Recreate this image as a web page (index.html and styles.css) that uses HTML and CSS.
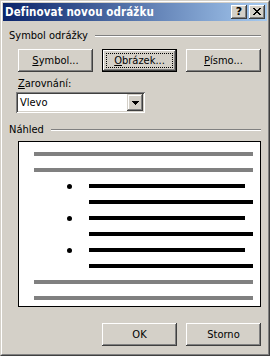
FILE: index.html
```html
<!DOCTYPE html>
<html>
<head>
<meta charset="utf-8">
<link rel="stylesheet" href="styles.css">
</head>
<body>
<div class="window">
  <div class="frame">
    <div class="titlebar">
      <span class="title">Definovat novou odrážku</span>
      <div class="tb-buttons">
        <div class="tb-btn help">?</div>
        <div class="tb-btn close">
          <svg width="8" height="7" viewBox="0 0 8 7" shape-rendering="crispEdges"><path fill="#000" d="M0 0h2v1H0z M6 0h2v1H6z M1 1h2v1H1z M5 1h2v1H5z M2 2h4v1H2z M3 3h2v1H3z M2 4h4v1H2z M1 5h2v1H1z M5 5h2v1H5z M0 6h2v1H0z M6 6h2v1H6z"/></svg>
        </div>
      </div>
    </div>
    <div class="content">
      <div class="group-head head-symbol"><span>Symbol odrážky</span><div class="etch"></div></div>
      <div class="btn-row">
        <div class="btn"><span><u>S</u>ymbol...</span></div>
        <div class="btn default"><span class="focus"><span><u>O</u>brázek...</span></span></div>
        <div class="btn"><span><u>P</u>ísmo...</span></div>
      </div>
      <div class="label"><u>Z</u>arovnání:</div>
      <div class="combo">
        <span class="combo-text">Vlevo</span>
        <div class="combo-btn">
          <svg width="7" height="4" viewBox="0 0 7 4" shape-rendering="crispEdges"><path fill="#000" d="M0 0h7v1H0z M1 1h5v1H1z M2 2h3v1H2z M3 3h1v1H3z"/></svg>
        </div>
      </div>
      <div class="group-head head-preview"><span>Náhled</span><div class="etch"></div></div>
      <div class="preview">
        <div class="gline"></div>
        <div class="gline"></div>
        <div class="brow"><span class="bullet"></span><span class="bar short"></span></div>
        <div class="brow plain"><span class="bar long"></span></div>
        <div class="brow"><span class="bullet"></span><span class="bar short"></span></div>
        <div class="brow plain"><span class="bar long"></span></div>
        <div class="brow"><span class="bullet"></span><span class="bar short"></span></div>
        <div class="brow plain"><span class="bar long"></span></div>
        <div class="gline"></div>
        <div class="gline"></div>
      </div>
      <div class="footer">
        <div class="btn"><span>OK</span></div>
        <div class="btn"><span>Storno</span></div>
      </div>
    </div>
  </div>
</div>
</body>
</html>
```
FILE: styles.css
```css
body {
  margin: 0;
  font-family: "DejaVu Sans Condensed", "DejaVu Sans", sans-serif;
  font-size: 11px;
  line-height: 13px;
  color: #000;
}
.window {
  width: 270px;
  height: 356px;
  box-sizing: border-box;
  background: #d4d0c8;
  border: 1px solid;
  border-color: #d4d0c8 #404040 #404040 #d4d0c8;
}
.frame {
  height: 100%;
  box-sizing: border-box;
  border: 1px solid;
  border-color: #fff #808080 #808080 #fff;
  padding: 1px;
  display: flex;
  flex-direction: column;
}
.titlebar {
  height: 18px;
  flex: none;
  background: linear-gradient(to right, #0a246a, #a6caf0);
  display: flex;
  align-items: center;
  justify-content: space-between;
  padding: 0 2px;
}
.title {
  color: #fff;
  font-weight: bold;
  font-size: 11.5px;
  letter-spacing: 0.1px;
}
.tb-buttons {
  display: flex;
  gap: 2px;
}
.tb-btn {
  width: 16px;
  height: 14px;
  box-sizing: border-box;
  background: #d4d0c8;
  box-shadow: inset -1px -1px #404040, inset 1px 1px #fff, inset -2px -2px #808080, inset 2px 2px #d4d0c8;
  display: flex;
  align-items: center;
  justify-content: center;
}
.help {
  font-family: "DejaVu Sans", sans-serif;
  font-weight: bold;
  font-size: 11px;
  line-height: 12px;
  padding-bottom: 1px;
}
.close svg {
  display: block;
  margin-bottom: 1px;
}
.content {
  flex: 1;
  display: flex;
  flex-direction: column;
  padding: 0 6px 0 0;
}
.group-head {
  display: flex;
  align-items: center;
  height: 13px;
  gap: 7px;
  padding-left: 6px;
}
.head-symbol { margin-top: 8px; }
.head-preview { margin-top: 10px; }
.etch {
  flex: 1;
  height: 0;
  border-top: 1px solid #808080;
  border-bottom: 1px solid #fff;
}
.btn-row {
  margin-top: 7px;
  margin-left: 15px;
  display: flex;
  gap: 9px;
}
.btn {
  width: 75px;
  height: 23px;
  box-sizing: border-box;
  background: #d4d0c8;
  box-shadow: inset -1px -1px #404040, inset 1px 1px #fff, inset -2px -2px #808080, inset 2px 2px #d4d0c8;
  display: flex;
  align-items: center;
  justify-content: center;
}
.btn.default {
  padding: 4px;
  box-shadow: inset 0 0 0 1px #000, inset -2px -2px #404040, inset 2px 2px #fff, inset -3px -3px #808080;
}
.focus {
  flex: 1;
  align-self: stretch;
  border: 1px dotted #000;
  display: flex;
  align-items: center;
  justify-content: center;
}
u { text-decoration-thickness: 1px; text-underline-offset: 1px; }
.label {
  margin-top: 5px;
  padding-left: 15px;
}
.combo {
  margin-top: 2px;
  margin-left: 13px;
  width: 129px;
  height: 21px;
  box-sizing: border-box;
  background: #fff;
  box-shadow: inset 1px 1px #808080, inset -1px -1px #fff, inset 2px 2px #404040, inset -2px -2px #d4d0c8;
  display: flex;
  align-items: center;
  padding: 2px;
}
.combo-text {
  padding-left: 2px;
}
.combo-btn {
  margin-left: auto;
  width: 16px;
  height: 17px;
  box-sizing: border-box;
  background: #d4d0c8;
  box-shadow: inset -1px -1px #404040, inset 1px 1px #d4d0c8, inset -2px -2px #808080, inset 2px 2px #fff;
  display: flex;
  align-items: center;
  justify-content: center;
}
.combo-btn svg { display: block; }
.preview {
  margin-top: 5px;
  margin-left: 15px;
  width: 243px;
  height: 166px;
  box-sizing: border-box;
  border: 1px solid #000;
  background: #fff;
  padding: 10px 0 0 15px;
  display: flex;
  flex-direction: column;
  gap: 12px;
}
.gline {
  width: 219px;
  height: 4px;
  background: #808080;
  flex: none;
}
.brow {
  display: flex;
  align-items: center;
  height: 4px;
  flex: none;
}
.brow.plain { padding-left: 55px; }
.bullet {
  width: 5px;
  height: 5px;
  border-radius: 50%;
  background: #000;
  margin-left: 33px;
  margin-right: 17px;
  flex: none;
}
.bar {
  height: 4px;
  background: #000;
}
.bar.short { width: 156px; }
.bar.long { width: 164px; }
.footer {
  margin-top: 16px;
  display: flex;
  justify-content: flex-end;
  gap: 9px;
}
```
